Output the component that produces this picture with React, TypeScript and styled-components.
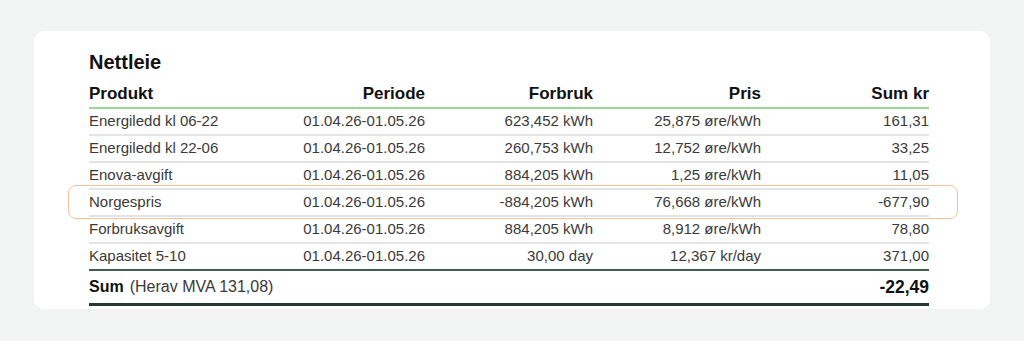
import React from "react";
import styled, { createGlobalStyle } from "styled-components";

interface Line {
  product: string;
  period: string;
  usage: string;
  price: string;
  sum: string;
  highlight?: boolean;
}

const lines: Line[] = [
  { product: "Energiledd kl 06-22", period: "01.04.26-01.05.26", usage: "623,452 kWh", price: "25,875 øre/kWh", sum: "161,31" },
  { product: "Energiledd kl 22-06", period: "01.04.26-01.05.26", usage: "260,753 kWh", price: "12,752 øre/kWh", sum: "33,25" },
  { product: "Enova-avgift", period: "01.04.26-01.05.26", usage: "884,205 kWh", price: "1,25 øre/kWh", sum: "11,05" },
  { product: "Norgespris", period: "01.04.26-01.05.26", usage: "-884,205 kWh", price: "76,668 øre/kWh", sum: "-677,90", highlight: true },
  { product: "Forbruksavgift", period: "01.04.26-01.05.26", usage: "884,205 kWh", price: "8,912 øre/kWh", sum: "78,80" },
  { product: "Kapasitet 5-10", period: "01.04.26-01.05.26", usage: "30,00 day", price: "12,367 kr/day", sum: "371,00" },
];

function App() {
  return (
    <>
      <GlobalStyle />
      <Page>
        <Card>
          <Title>Nettleie</Title>
          <HeadRow>
            <Cell>Produkt</Cell>
            <Cell $right>Periode</Cell>
            <Cell $right>Forbruk</Cell>
            <Cell $right>Pris</Cell>
            <Cell $right>Sum kr</Cell>
          </HeadRow>
          {lines.map((l, i) => (
            <Row key={l.product} $highlight={l.highlight} $last={i === lines.length - 1}>
              <Cell>{l.product}</Cell>
              <Cell $right>{l.period}</Cell>
              <Cell $right>{l.usage}</Cell>
              <Cell $right>{l.price}</Cell>
              <Cell $right>{l.sum}</Cell>
            </Row>
          ))}
          <SumRow>
            <SumLabel>
              <strong>Sum</strong>
              <span>(Herav MVA 131,08)</span>
            </SumLabel>
            <SumValue>-22,49</SumValue>
          </SumRow>
        </Card>
      </Page>
    </>
  );
}

export default App;

const GlobalStyle = createGlobalStyle`
  body {
    margin: 0;
    background: #f1f4f3;
    font-family: "Liberation Sans", Arial, sans-serif;
  }
`;

const Page = styled.div`
  width: 1024px;
  height: 341px;
  padding: 31px 34px 0;
  box-sizing: border-box;
`;

const Card = styled.div`
  width: 956px;
  height: 278px;
  box-sizing: border-box;
  background: #fff;
  border-radius: 10px;
  padding: 20px 61px 0 55px;
`;

const Title = styled.div`
  font-size: 20px;
  line-height: 22px;
  font-weight: 700;
  color: #111;
  margin-bottom: 11px;
`;

const Grid = styled.div`
  display: grid;
  grid-template-columns: repeat(5, 1fr);
`;

const HeadRow = styled(Grid)`
  font-size: 17px;
  line-height: 20px;
  font-weight: 700;
  color: #111;
  padding-bottom: 3px;
  border-bottom: 2px solid #97d894;
`;

const Row = styled(Grid)<{ $highlight?: boolean; $last?: boolean }>`
  position: relative;
  height: 23px;
  padding-bottom: 2px;
  align-items: center;
  font-size: 15px;
  color: #3a3a3a;
  border-bottom: ${(p) => (p.$last ? "2px solid #3f5c4f" : "2px solid #e4e4e4")};

  &::before {
    content: "";
    display: ${(p) => (p.$highlight ? "block" : "none")};
    position: absolute;
    left: -21px;
    right: -29px;
    top: -5px;
    bottom: -4px;
    border: 1px solid #f7c19c;
    border-radius: 8px;
    pointer-events: none;
  }
`;

const Cell = styled.div<{ $right?: boolean }>`
  text-align: ${(p) => (p.$right ? "right" : "left")};
  white-space: nowrap;
`;

const SumRow = styled.div`
  display: flex;
  align-items: center;
  justify-content: space-between;
  height: 32px;
  border-bottom: 3px solid #1e3c2f;
`;

const SumLabel = styled.div`
  display: flex;
  gap: 6px;
  font-size: 16px;
  color: #3a3a3a;

  strong {
    color: #111;
  }
`;

const SumValue = styled.div`
  font-size: 17.5px;
  font-weight: 700;
  color: #111;
`;
